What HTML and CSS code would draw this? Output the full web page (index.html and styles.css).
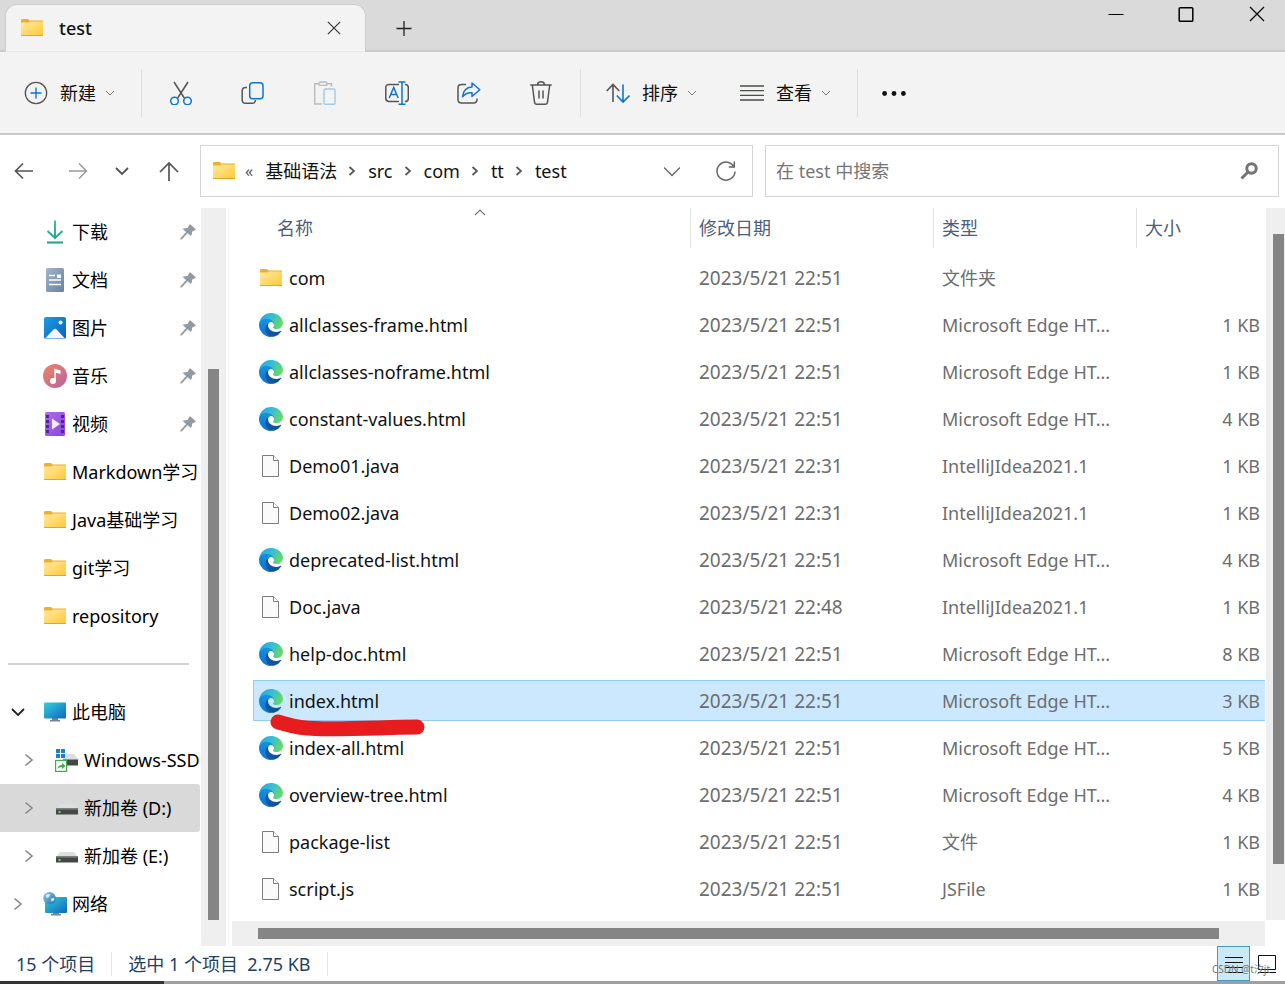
FILE: index.html
```html
<!DOCTYPE html>
<html lang="zh-CN">
<head>
<meta charset="utf-8">
<title>test</title>
<link rel="stylesheet" href="styles.css">
</head>
<body>
<svg class="defs" aria-hidden="true">
  <defs>
    <linearGradient id="gFolder" x1="0" y1="0" x2="1" y2="1"><stop offset="0" stop-color="#ffe9a2"/><stop offset="1" stop-color="#ffc933"/></linearGradient>
    <linearGradient id="gEdgeTop" x1="0" y1="0.3" x2="1" y2="0.6"><stop offset="0" stop-color="#25a6e6"/><stop offset="0.5" stop-color="#38bfd0"/><stop offset="1" stop-color="#6bdc5c"/></linearGradient>
    <linearGradient id="gEdgeMid" x1="0.7" y1="0" x2="0.3" y2="1"><stop offset="0" stop-color="#1797e0"/><stop offset="1" stop-color="#0b74d6"/></linearGradient>
    <linearGradient id="gEdgeLow" x1="0" y1="0" x2="1" y2="0.4"><stop offset="0" stop-color="#0d5cab"/><stop offset="1" stop-color="#135296"/></linearGradient>
    <linearGradient id="gDown" x1="0" y1="0" x2="0" y2="1"><stop offset="0" stop-color="#3fc0a0"/><stop offset="1" stop-color="#1ca28a"/></linearGradient>
    <linearGradient id="gDoc" x1="0" y1="0" x2="1" y2="1"><stop offset="0" stop-color="#a3b5ca"/><stop offset="1" stop-color="#6782a2"/></linearGradient>
    <linearGradient id="gPic" x1="0" y1="0" x2="1" y2="1"><stop offset="0" stop-color="#1b9be6"/><stop offset="1" stop-color="#0a63b5"/></linearGradient>
    <linearGradient id="gMusic" x1="0" y1="0" x2="1" y2="1"><stop offset="0" stop-color="#ef8560"/><stop offset="1" stop-color="#b464a4"/></linearGradient>
    <linearGradient id="gVideo" x1="0" y1="0" x2="1" y2="1"><stop offset="0" stop-color="#b06cf0"/><stop offset="1" stop-color="#8a45dc"/></linearGradient>
    <linearGradient id="gScreen" x1="0" y1="0" x2="1" y2="1"><stop offset="0" stop-color="#33d0d8"/><stop offset="1" stop-color="#0f66c2"/></linearGradient>
    <linearGradient id="gGlobe" x1="0" y1="0" x2="1" y2="1"><stop offset="0" stop-color="#8fd0ee"/><stop offset="1" stop-color="#1a6fa8"/></linearGradient>
  </defs>
  <symbol id="folder" viewBox="0 0 24 24"><path d="M1 4.500Q1 3 2 3H8L9.500 4.500H23V9H1Z" fill="#eab02f"/><path d="M1 6.500H8.500L9.800 5.500H23V20H1Z" fill="url(#gFolder)"/><path d="M1 19.500H23" stroke="#e3a52c"/></symbol>
  <symbol id="edge" viewBox="0 0 256 256">
    <path fill="url(#gEdgeLow)" d="M231 190.5c-3.4 1.8-6.9 3.4-10.5 4.7a101.5 101.5 0 0 1-35.9 6.5c-47.3 0-88.500-32.500-88.500-74.300 0-11.400 6.400-21.900 16.400-27.300-42.800 1.800-53.800 46.400-53.800 72.500 0 74 68.100 81.400 82.800 81.400 7.900 0 19.800-2.300 27-4.600l1.300-.4a128.300 128.300 0 0 0 66.600-52.800 4 4 0 0 0-5.400-5.700z"/>
    <path fill="url(#gEdgeMid)" d="M105.700 241.400a79.200 79.200 0 0 1-22.700-21.300 80.700 80.700 0 0 1 29.500-120c3.200-1.500 8.500-4.100 15.600-4a32.400 32.400 0 0 1 25.700 13 31.900 31.900 0 0 1 6.300 18.700c0-.2 24.500-79.600-80-79.600-43.900 0-80 41.700-80 78.200a130.200 130.200 0 0 0 12.100 56 128 128 0 0 0 156.400 67 75.500 75.500 0 0 1-62.800-8z"/>
    <path fill="url(#gEdgeTop)" d="M152.300 148.900c-.9 1-3.400 2.500-3.400 5.600 0 2.600 1.700 5.200 4.800 7.300 14.400 10.100 41.700 8.700 41.700 8.700a59.600 59.600 0 0 0 30.300-8.300 61.400 61.400 0 0 0 30.400-52.900c.3-22.400-8-37.300-11.300-43.900C223.500 23.900 177.700 0 128 0A128 128 0 0 0 0 126.200c.5-36.500 36.800-66 80-66 3.500 0 23.500.3 42 10.100a72.600 72.600 0 0 1 30.900 29.300c6.100 10.600 7.200 24.100 7.200 29.500s-2.700 13.300-7.800 19.900z"/>
  </symbol>
  <symbol id="file" viewBox="0 0 24 24"><path d="M3.500 1.500H14.500L19.500 6.500V22.500H3.500Z" fill="#fafafa" stroke="#7d7d7d"/><path d="M14.500 1.500V6.500H19.500" fill="#fff" stroke="#7d7d7d"/></symbol>
  <symbol id="pin" viewBox="0 0 16 16"><path d="M9.300 .8Q10 .1 10.800 .8L15.200 4.800Q16 5.700 15 6.200L12.300 7.600L11.500 11.300Q11.200 12.300 10.300 11.600L7.600 9.300L2 15.300Q.9 16.200 .4 15.300Q0 14.800 .7 14L6.100 8L3.200 5.500Q2.500 4.600 3.600 4.400L7.600 3.900Z" fill="#929ba3"/></symbol>
  <symbol id="chev" viewBox="0 0 10 10"><path d="M1 3L5 7L9 3" fill="none" stroke="currentColor"/></symbol>
  <symbol id="chevright" viewBox="0 0 10 14"><path d="M1.500 1.500L8 7L1.500 12.500" fill="none" stroke="currentColor" stroke-width="1.600"/></symbol>
  <symbol id="crumb" viewBox="0 0 8 12"><path d="M1.500 2L6 6L1.500 10" fill="none" stroke="currentColor" stroke-width="1.700"/></symbol>
  <symbol id="close" viewBox="0 0 16 16"><path d="M1 1L15 15M15 1L1 15" fill="none" stroke="currentColor" stroke-width="1.400"/></symbol>
  <symbol id="drive" viewBox="0 0 24 24"><path d="M5 8H19L23 13H1Z" fill="#dcdee0"/><path d="M1 12.500H23V18.500H1Z" fill="#444746"/><path d="M1 12.500H23V14H1Z" fill="#686b6a"/><rect x="3.500" y="15" width="2" height="2" fill="#57dc72"/></symbol>
</svg>

<header class="titlebar">
  <div class="tab">
    <svg class="ico"><use href="#folder"/></svg>
    <span class="tab-title">test</span>
    <button class="tab-close" aria-label="关闭标签页"><svg class="ico14"><use href="#close"/></svg></button>
  </div>
  <button class="tab-add" aria-label="新建标签页"><svg class="ico16" viewBox="0 0 16 16"><path d="M8 1V16M.5 8.500H15.500" stroke="#222" stroke-width="1.300"/></svg></button>
  <div class="window-buttons">
    <button aria-label="最小化"><svg class="ico16" viewBox="0 0 16 16"><path d="M.5 8.500H15.500" stroke="#000"/></svg></button>
    <button aria-label="最大化"><svg class="ico16" viewBox="0 0 16 16"><rect x="1.200" y="1.700" width="13.600" height="13.600" rx="1" fill="none" stroke="#000" stroke-width="1.500"/></svg></button>
    <button aria-label="关闭"><svg class="ico16"><use href="#close"/></svg></button>
  </div>
</header>

<div class="toolbar">
  <button class="tool new"><svg class="ico" viewBox="0 0 24 24" fill="none"><circle cx="12" cy="12" r="10.700" stroke="#555" stroke-width="1.300"/><path d="M12 6.500V17.500M6.500 12H17.500" stroke="#0f74d1" stroke-width="1.400"/></svg><span>新建</span><svg class="chev"><use href="#chev"/></svg></button>
  <i class="sep"></i>
  <div class="icon-tools">
    <button aria-label="剪切"><svg class="ico" viewBox="0 0 24 24" fill="none" stroke-width="1.500"><path d="M5 1L15.300 17M19 1L8.700 17" stroke="#555"/><circle cx="5.500" cy="20" r="3.800" stroke="#0f74d1"/><circle cx="18.500" cy="20" r="3.800" stroke="#0f74d1"/></svg></button>
    <button aria-label="复制"><svg class="ico" viewBox="0 0 24 24" fill="none" stroke-width="1.500"><path d="M6 6.500H4.500Q1.200 6.500 1.200 9.800V19Q1.200 22.300 4.500 22.300H11Q14.500 22.300 14.500 19" stroke="#555"/><rect x="8.700" y="1.700" width="13.300" height="16" rx="3" stroke="#0f74d1"/></svg></button>
    <button aria-label="粘贴"><svg class="ico" viewBox="0 0 24 24" fill="none" stroke-width="1.400"><path d="M6 2.800H1.700V23H9M13.500 2.800H18.500V5.500" stroke="#b9bcbe"/><rect x="6" y="1" width="8" height="3.400" rx="1.500" stroke="#b9bcbe"/><rect x="11" y="8" width="11" height="15.300" rx="1" stroke="#9fcaea"/></svg></button>
    <button aria-label="重命名"><svg class="ico" viewBox="0 0 24 24" fill="none" stroke-width="1.500"><path d="M14 3.500H4Q.8 3.500 .8 6.700V17.300Q.8 20.500 4 20.500H14M20 3.500Q23.300 3.500 23.300 6.700V17.300Q23.300 20.500 20 20.500" stroke="#555"/><path d="M4.200 17L8.700 6.500L13.200 17M5.800 13.500H11.600M17 1V23M13.500 1H20.500M13.500 23.200H20.500" stroke="#0f74d1"/></svg></button>
    <button aria-label="共享"><svg class="ico" viewBox="0 0 24 24" fill="none" stroke-width="1.500" stroke-linejoin="round"><path d="M9 3.500H4.500Q1 3.500 1 7V18.500Q1 22 4.500 22H16.500Q20 22 20 18.500V17.500" stroke="#555"/><path d="M15 2L22.800 8.800L15 15.500V11.700Q9 11.200 5.500 15.800Q6.500 6.500 15 6Z" stroke="#0f74d1"/></svg></button>
    <button aria-label="删除"><svg class="ico" viewBox="0 0 24 24" fill="none" stroke="#555" stroke-width="1.500"><path d="M1.300 4H22.700M3.300 4L5.500 21Q5.800 23.200 7.700 23.200H16.300Q18.200 23.200 18.500 21L20.700 4M8.500 3.500Q9 .8 12 .8Q15 .8 15.500 3.500M10 9.500V17.500M14 9.500V17.500"/></svg></button>
  </div>
  <i class="sep"></i>
  <button class="tool sort"><svg class="ico" viewBox="0 0 24 24" fill="none" stroke-width="1.600"><path d="M7 21V3.500M.7 10L7 3.500L13.300 10" stroke="#555"/><path d="M17 3.500V21M10.800 14.500L17 21L23.500 14.500" stroke="#0f74d1"/></svg><span>排序</span><svg class="chev"><use href="#chev"/></svg></button>
  <button class="tool view"><svg class="ico" viewBox="0 0 24 24" stroke="#4a4f4a" stroke-width="1.300"><path d="M0 5H24M0 9.700H24M0 14.300H24M0 19H24"/></svg><span>查看</span><svg class="chev"><use href="#chev"/></svg></button>
  <i class="sep"></i>
  <button class="more" aria-label="更多"><svg class="ico" viewBox="0 0 24 24" fill="#111"><circle cx="2.600" cy="12.500" r="2.400"/><circle cx="12" cy="12.500" r="2.400"/><circle cx="21.400" cy="12.500" r="2.400"/></svg></button>
</div>

<nav class="navbar">
  <div class="history">
    <button class="back" aria-label="后退"><svg class="ico20" viewBox="0 0 20 20" fill="none" stroke="#555" stroke-width="1.700"><path d="M19 10H1.500M9 2.500L1.500 10L9 17.500"/></svg></button>
    <button class="forward" aria-label="前进"><svg class="ico20" viewBox="0 0 20 20" fill="none" stroke="#999" stroke-width="1.500"><path d="M1 10H18.500M11 2.500L18.500 10L11 17.500"/></svg></button>
    <button class="recent" aria-label="最近"><svg class="ico14" viewBox="0 0 14 14" fill="none" stroke="#555" stroke-width="1.900"><path d="M1 4L7 10L13 4"/></svg></button>
    <button class="up" aria-label="上移"><svg class="ico20" viewBox="0 0 20 20" fill="none" stroke="#555" stroke-width="1.700"><path d="M10 20V2M1 11L10 2L19 11"/></svg></button>
  </div>
  <div class="address">
    <svg class="ico"><use href="#folder"/></svg>
    <span class="overflow">«</span>
    <a href="#">基础语法</a><svg class="crumb"><use href="#crumb"/></svg>
    <a href="#">src</a><svg class="crumb"><use href="#crumb"/></svg>
    <a href="#">com</a><svg class="crumb"><use href="#crumb"/></svg>
    <a href="#">tt</a><svg class="crumb"><use href="#crumb"/></svg>
    <a href="#">test</a>
    <button class="drop" aria-label="历史记录"><svg class="ico16" viewBox="0 0 16 16" fill="none" stroke="#666" stroke-width="1.300"><path d="M0 4.500L8 12.500L16 4.500"/></svg></button>
    <button class="refresh" aria-label="刷新"><svg class="ico20" viewBox="0 0 20 20" fill="none" stroke="#666" stroke-width="1.500"><path d="M18 6A9 9 0 1 0 19 10.500M18.300 .5V6H12.800"/></svg></button>
  </div>
  <div class="search">
    <input type="text" aria-label="搜索" placeholder="在 test 中搜索">
    <svg class="ico18" viewBox="0 0 18 18" fill="none" stroke="#737373"><circle cx="11.500" cy="6.500" r="4.700" stroke-width="3"/><path d="M8 10L1.500 16.500" stroke-width="3"/></svg>
  </div>
</nav>

<main class="main">
  <aside class="sidebar">
    <ul class="tree">
      <li><svg class="ico" viewBox="0 0 24 24" fill="none" stroke="url(#gDown)" stroke-width="2"><path d="M12 .5V17.500M4.500 11L12 18L19.500 11M4 22.500H20"/></svg><span>下载</span><svg class="pin"><use href="#pin"/></svg></li>
      <li><svg class="ico" viewBox="0 0 24 24"><rect x="3" y="0" width="18" height="24" rx="1.500" fill="url(#gDoc)"/><path d="M6 7.500H12M6 12H18M6 16.500H18" stroke="#fff" stroke-width="1.400"/><path d="M14 6.500H18V10H14Z" fill="#fff"/></svg><span>文档</span><svg class="pin"><use href="#pin"/></svg></li>
      <li><svg class="ico" viewBox="0 0 24 24"><rect x="1" y="1" width="22" height="22" rx="2" fill="url(#gPic)"/><path d="M2 22.500L10.500 13.500Q12 12 13.500 13.500L22 22.500Z" fill="#f2f8fd"/><circle cx="17.500" cy="6.500" r="2" fill="#fff"/></svg><span>图片</span><svg class="pin"><use href="#pin"/></svg></li>
      <li><svg class="ico" viewBox="0 0 24 24"><circle cx="12" cy="12" r="12" fill="url(#gMusic)"/><circle cx="10" cy="17" r="3" fill="#fff"/><path d="M11.300 17V4.500L17.500 6.500V10L13 8.700V17Z" fill="#fff"/></svg><span>音乐</span><svg class="pin"><use href="#pin"/></svg></li>
      <li><svg class="ico" viewBox="0 0 24 24"><rect x="2" y="0" width="20" height="24" rx="1.500" fill="url(#gVideo)"/><path d="M4.500 3V22M19.500 3V22" stroke="#4f2590" stroke-width="3" stroke-dasharray="3 2"/><path d="M9 6.500L17 12L9 17.500Z" fill="#f5edff"/></svg><span>视频</span><svg class="pin"><use href="#pin"/></svg></li>
      <li><svg class="ico"><use href="#folder"/></svg><span>Markdown学习</span></li>
      <li><svg class="ico"><use href="#folder"/></svg><span>Java基础学习</span></li>
      <li><svg class="ico"><use href="#folder"/></svg><span>git学习</span></li>
      <li><svg class="ico"><use href="#folder"/></svg><span>repository</span></li>
    </ul>
    <hr class="rule">
    <ul class="tree places">
      <li class="open"><svg class="arrow" viewBox="0 0 14 14" fill="none" stroke="#222" stroke-width="1.800"><path d="M1 4L7 10L13 4"/></svg><svg class="ico" viewBox="0 0 24 24"><path d="M9 18H15V20H17V21.500H7V20H9Z" fill="#7b8288"/><rect x="1" y="2.500" width="22" height="16" rx="1" fill="url(#gScreen)"/></svg><span>此电脑</span></li>
      <li class="child"><svg class="arrow"><use href="#chevright"/></svg><svg class="ico" viewBox="0 0 24 24"><path d="M8 6H19L24 12H8Z" fill="#dcdee0"/><path d="M8 11.500H23V17.500H8Z" fill="#444746"/><path d="M1 1H5V5H1ZM6 1H10V5H6ZM1 6H5V10H1ZM6 6H10V10H6Z" fill="#1682d6"/><rect x=".6" y="12.400" width="11" height="11" fill="#fff" stroke="#3cae4a" stroke-width="1.200"/><path d="M2.500 21Q3 17 7 17V15L10.500 18L7 21V19Q4 19 2.500 21Z" fill="#3cae4a"/></svg><span>Windows-SSD</span></li>
      <li class="child current"><svg class="arrow"><use href="#chevright"/></svg><svg class="ico"><use href="#drive"/></svg><span>新加卷 (D:)</span></li>
      <li class="child"><svg class="arrow"><use href="#chevright"/></svg><svg class="ico"><use href="#drive"/></svg><span>新加卷 (E:)</span></li>
      <li><svg class="arrow"><use href="#chevright"/></svg><svg class="ico" viewBox="0 0 24 24"><path d="M10 20H16V22H18V23.500H8V22H10Z" fill="#7b8288"/><rect x="2" y="5" width="22" height="16" rx="1" fill="url(#gScreen)"/><circle cx="6.500" cy="6.200" r="6.200" fill="url(#gGlobe)"/><path d="M3 3Q6 1 7 3Q6 6 3.500 6ZM8 7Q11 5 11.500 7Q10 10 8.500 9.500Z" fill="#d9f0fa"/></svg><span>网络</span></li>
    </ul>
  </aside>
  <div class="vscroll side-scroll"><i></i></div>
  <section class="content">
    <div class="files-area">
      <div class="files-wrap">
        <table class="files">
          <thead>
            <tr>
              <th class="c-name"><div class="head">名称<svg class="sorted" viewBox="0 0 12 8"><path d="M1 7L6 2L11 7" fill="none" stroke="#777" stroke-width="1.200"/></svg></div></th>
              <th class="c-date"><div class="head lined">修改日期</div></th>
              <th class="c-type"><div class="head lined">类型</div></th>
              <th class="c-size"><div class="head lined">大小</div></th>
            </tr>
          </thead>
          <tbody>
            <tr><td><div class="name"><svg class="ico"><use href="#folder"/></svg>com</div></td><td class="date">2023/5/21 22:51</td><td>文件夹</td><td></td></tr>
            <tr><td><div class="name"><svg class="ico"><use href="#edge"/></svg>allclasses-frame.html</div></td><td class="date">2023/5/21 22:51</td><td>Microsoft Edge HT...</td><td>1 KB</td></tr>
            <tr><td><div class="name"><svg class="ico"><use href="#edge"/></svg>allclasses-noframe.html</div></td><td class="date">2023/5/21 22:51</td><td>Microsoft Edge HT...</td><td>1 KB</td></tr>
            <tr><td><div class="name"><svg class="ico"><use href="#edge"/></svg>constant-values.html</div></td><td class="date">2023/5/21 22:51</td><td>Microsoft Edge HT...</td><td>4 KB</td></tr>
            <tr><td><div class="name"><svg class="ico"><use href="#file"/></svg>Demo01.java</div></td><td class="date">2023/5/21 22:31</td><td>IntelliJIdea2021.1</td><td>1 KB</td></tr>
            <tr><td><div class="name"><svg class="ico"><use href="#file"/></svg>Demo02.java</div></td><td class="date">2023/5/21 22:31</td><td>IntelliJIdea2021.1</td><td>1 KB</td></tr>
            <tr><td><div class="name"><svg class="ico"><use href="#edge"/></svg>deprecated-list.html</div></td><td class="date">2023/5/21 22:51</td><td>Microsoft Edge HT...</td><td>4 KB</td></tr>
            <tr><td><div class="name"><svg class="ico"><use href="#file"/></svg>Doc.java</div></td><td class="date">2023/5/21 22:48</td><td>IntelliJIdea2021.1</td><td>1 KB</td></tr>
            <tr><td><div class="name"><svg class="ico"><use href="#edge"/></svg>help-doc.html</div></td><td class="date">2023/5/21 22:51</td><td>Microsoft Edge HT...</td><td>8 KB</td></tr>
            <tr class="selected"><td><div class="name"><svg class="ico"><use href="#edge"/></svg>index.html<svg class="marker" viewBox="0 0 156 24"><path d="M8 9C20 12 26 15.500 45 15.500C75 16.500 110 14.500 147 14" fill="none" stroke="#e71c1e" stroke-width="15" stroke-linecap="round"/></svg></div></td><td class="date">2023/5/21 22:51</td><td>Microsoft Edge HT...</td><td>3 KB</td></tr>
            <tr><td><div class="name"><svg class="ico"><use href="#edge"/></svg>index-all.html</div></td><td class="date">2023/5/21 22:51</td><td>Microsoft Edge HT...</td><td>5 KB</td></tr>
            <tr><td><div class="name"><svg class="ico"><use href="#edge"/></svg>overview-tree.html</div></td><td class="date">2023/5/21 22:51</td><td>Microsoft Edge HT...</td><td>4 KB</td></tr>
            <tr><td><div class="name"><svg class="ico"><use href="#file"/></svg>package-list</div></td><td class="date">2023/5/21 22:51</td><td>文件</td><td>1 KB</td></tr>
            <tr><td><div class="name"><svg class="ico"><use href="#file"/></svg>script.js</div></td><td class="date">2023/5/21 22:51</td><td>JSFile</td><td>1 KB</td></tr>
          </tbody>
        </table>
      </div>
      <div class="hscroll"><i></i></div>
    </div>
    <div class="vscroll main-scroll"><i></i></div>
  </section>
</main>

<footer class="status">
  <span class="cell">15 个项目</span>
  <span class="cell">选中 1 个项目&nbsp; 2.75 KB</span>
  <div class="layouts">
    <button class="details" aria-label="详细信息"><svg class="ico18" viewBox="0 0 18 18" stroke="#111"><path d="M0 2.500H18M0 7.500H18M0 12.500H18M0 17.500H18"/></svg></button>
    <button class="large" aria-label="大图标"><svg class="ico18" viewBox="0 0 18 18" fill="none" stroke="#111"><path d="M.5 .5H17.500V14.500H.5ZM0 17.500H18"/></svg></button>
    <span class="watermark">CSDN @t汐jt</span>
  </div>
</footer>
<div class="behind"><i></i></div>
</body>
</html>
```
FILE: styles.css
```css
* { box-sizing: border-box; }
body {
  margin: 0;
  min-height: 100vh;
  display: flex;
  flex-direction: column;
  background: #fff;
  color: #111;
  font: 18px/24px "Noto Sans", "Noto Sans CJK SC", sans-serif;
}
button {
  display: flex;
  align-items: center;
  justify-content: center;
  padding: 0;
  border: 0;
  background: none;
  color: #111;
  font: inherit;
}
a { color: inherit; text-decoration: none; }
svg { flex: none; display: block; }
.defs { position: absolute; width: 0; height: 0; }
.ico { width: 24px; height: 24px; }
.ico20 { width: 20px; height: 20px; }
.ico18 { width: 18px; height: 18px; }
.ico16 { width: 16px; height: 16px; }
.ico14 { width: 14px; height: 14px; }
.chev { width: 10px; height: 10px; color: #777; }

/* Title bar */
.titlebar {
  display: flex;
  align-items: flex-end;
  height: 52px;
  padding-left: 5px;
  background: #dadada;
  box-shadow: inset 0 -2px #cacaca;
}
.tab {
  display: flex;
  align-items: center;
  width: 361px;
  height: 48px;
  padding: 0 24px 0 14px;
  border: 1px solid #cdcdcd;
  border-bottom-color: #e8e8e8;
  border-radius: 12px 12px 0 0;
  background: #f3f3f3;
}
.tab-title { flex: 1; margin-left: 15px; font-weight: 500; }
.tab-close { width: 14px; height: 24px; color: #333; }
.tab-add { width: 48px; height: 48px; margin-left: 14px; }
.window-buttons { display: flex; align-self: flex-start; margin-left: auto; padding-right: 20px; }
.window-buttons button { width: 70px; height: 28px; }
.window-buttons button:last-child { width: 44px; justify-content: flex-end; }

/* Command bar */
.toolbar {
  display: flex;
  align-items: center;
  height: 83px;
  background: #f3f3f3;
  border-bottom: 2px solid #c9c9c9;
}
.sep { width: 1px; height: 48px; background: #dedede; }
.tool { gap: 12px; height: 48px; }
.tool .chev { margin-left: -3px; }
.new { padding: 0 26px 0 24px; }
.icon-tools { display: flex; padding: 0 3px; }
.icon-tools button { width: 72px; height: 48px; }
.sort { padding: 0 23px 0 25px; }
.view { padding: 0 26px 0 20px; }
.more { width: 72px; height: 48px; }

/* Navigation row */
.navbar {
  display: flex;
  gap: 12px;
  height: 73px;
  padding: 10px 6px 11px 0;
}
.history { display: flex; flex: none; align-items: center; width: 188px; }
.history button { flex: none; height: 48px; }
.back, .forward { width: 48px; }
.forward { margin-left: 6px; }
.recent { width: 40px; }
.up { width: 38px; margin-left: 8px; }
.address, .search {
  display: flex;
  align-items: center;
  min-width: 0;
  border: 1px solid #d5d5d5;
}
.address { flex: 524 1 0; padding: 0 16px 0 11px; }
.search { flex: 482 1 0; padding: 0 20px 0 10px; }
.overflow { margin: 0 12px 0 9px; font-size: 16px; color: #555; }
.crumb { width: 8px; height: 12px; margin: 0 12px 0 11px; color: #555; }
.drop { margin-left: auto; margin-right: 36px; }
.search input {
  flex: 1;
  min-width: 0;
  padding: 0;
  border: 0;
  outline: 0;
  background: none;
  font: inherit;
  color: #111;
}
.search input::placeholder { color: #757575; opacity: 1; }

/* Folder tree */
.main { flex: 1; display: flex; min-height: 0; }
.sidebar { width: 200px; overflow: hidden; color: #000; }
.tree { margin: 0; padding: 0; list-style: none; }
.tree li {
  display: flex;
  align-items: center;
  gap: 5px;
  height: 48px;
  padding-left: 43px;
  white-space: nowrap;
}
.pin { width: 16px; height: 16px; margin: 0 4px 0 auto; }
.rule { height: 2px; margin: 23px 11px 23px 8px; border: 0; background: #d2d2d2; }
.places li { padding-left: 11px; }
.places .child { padding-left: 22px; }
.arrow { width: 14px; height: 14px; margin-right: 13px; color: #888; }
.child .arrow { margin-right: 14px; }
.places .current { background: #d9d9d9; border-radius: 0 3px 3px 0; }

/* Scroll bars */
.vscroll, .hscroll { display: flex; flex: none; background: #efefef; }
.vscroll i, .hscroll i { flex: 1; background: #858585; }
.side-scroll { width: 25px; margin-left: 1px; }
.side-scroll i { margin: 161px 7px 26px; }
.main-scroll { width: 19px; margin: 0 0 26px 1px; }
.main-scroll i { margin: 26px 1px 56px 7px; }
.hscroll { height: 25px; }
.hscroll i { margin: 7px 46px 7px 26px; }

/* File list */
.content { flex: 1; display: flex; min-width: 0; margin-left: 2px; padding-left: 3px; border-left: 1px solid #f4f4f4; }
.files-area { flex: 1; display: flex; flex-direction: column; min-width: 0; }
.files-wrap { flex: 1; padding-left: 21px; }
.files {
  width: 100%;
  margin-top: -6px;
  table-layout: fixed;
  border-collapse: separate;
  border-spacing: 0 6px;
}
.files th { height: 43px; padding: 0; vertical-align: top; text-align: left; font-weight: 400; color: #4c607a; }
.files .c-name { padding-left: 16px; }
.c-date { width: 243px; }
.c-type { width: 203px; }
.c-size { width: 129px; }
.head { position: relative; height: 40px; padding: 8px; }
.lined { border-left: 1px solid #e2e2e2; }
.sorted { position: absolute; top: 0; left: 50%; width: 12px; height: 8px; margin-left: -6px; }
.files td { height: 41px; padding: 0 0 0 9px; border: 0 solid #99c9ef; color: #6d6d6d; white-space: nowrap; }
.files .date { font-size: 19px; }
.files td:first-child { padding-left: 6px; color: #111; }
.files td:last-child { padding-right: 5px; text-align: right; }
.name { position: relative; display: flex; align-items: center; gap: 6px; }
.files .selected td { background: #cce8ff; border-width: 1px 0; }
.files .selected td:first-child { border-left-width: 1px; padding-left: 5px; }
.marker { position: absolute; left: 11px; top: 24px; width: 156px; height: 24px; }

/* Status bar */
.status { display: flex; align-items: center; height: 35px; color: #24405f; }
.cell { padding: 0 16px; border-right: 1px solid #e8e8e8; }
.layouts { position: relative; display: flex; align-items: center; align-self: stretch; margin-left: auto; padding-right: 9px; }
.details { width: 33px; height: 35px; border: 1px solid #3d9cc4; background: #cbe8f6; }
.large { margin-left: 8px; }
.watermark { position: absolute; right: 15px; bottom: 4px; font-size: 10px; line-height: 16px; color: #777; white-space: nowrap; }
.behind { height: 3px; background: #a0a0a0; }
.behind i { display: block; width: 164px; height: 3px; background: #333; }
```
